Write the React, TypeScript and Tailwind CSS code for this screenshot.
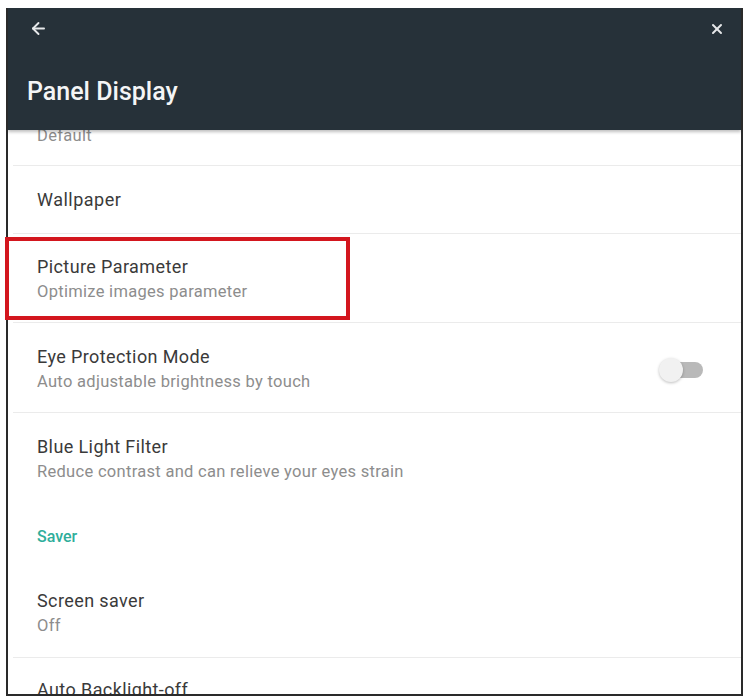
import React from "react";
import { ArrowLeft, X } from "lucide-react";

const font = { fontFamily: "Roboto, 'Noto Sans', Arial, sans-serif" };

function Divider() {
  return <div className="ml-[5px] h-px bg-[#ebebeb]" />;
}

function TwoLine({ title, sub, right, pt = "pt-[21px]", pb = "pb-[20px]" }: { title: string; sub: string; right?: React.ReactNode; pt?: string; pb?: string }) {
  return (
    <div className={`flex items-center justify-between pl-[29px] pr-[38px] ${pt} ${pb}`}>
      <div className="flex flex-col">
        <div className="text-[18px] leading-6 tracking-[0.4px] text-[#3a3a3a]">{title}</div>
        <div className="mt-[3px] text-[16.5px] leading-5 tracking-[0.3px] text-[#8d8d8d]">{sub}</div>
      </div>
      {right}
    </div>
  );
}

function Toggle() {
  return (
    <div className="relative mt-[2px] h-[24px] w-[44px]">
      <div className="absolute right-0 top-[4px] h-[16px] w-[32px] rounded-full bg-[#b9b9b9]" />
      <div className="absolute left-0 top-0 h-[24px] w-[24px] rounded-full bg-[#f1f1f1] shadow-[0_1px_3px_rgba(0,0,0,0.25)]" />
    </div>
  );
}

export default function App() {
  return (
    <div className="relative h-[698px] w-[745px] overflow-hidden bg-white" style={font}>
      <div className="ml-[6px] mt-[8px] flex h-[688px] w-[737px] flex-col overflow-hidden border-x-2 border-b-2 border-[#2a2a2a] bg-white">
        <div className="relative z-10 flex h-[122px] shrink-0 flex-col bg-[#263139] shadow-[0_2px_3px_rgba(0,0,0,0.25)]">
          <div className="flex items-center justify-between pl-[21px] pr-[16px] pt-[11px]">
            <ArrowLeft size={19} strokeWidth={2.4} className="text-[#e6e8ea]" />
            <X size={16} strokeWidth={3} className="text-[#e6e8ea]" />
          </div>
          <div className="pl-[19px] pt-[38px] text-[25px] font-medium leading-8 text-[#f4f5f6]">Panel Display</div>
        </div>
        <div className="flex flex-col">
          <div className="h-[35px] pl-[29px]">
            <div className="-mt-[4px] text-[16.5px] leading-5 tracking-[0.3px] text-[#8d8d8d]">Default</div>
          </div>
          <Divider />
          <div className="flex h-[67px] items-center pl-[29px] text-[18px] tracking-[0.5px] text-[#3a3a3a]">Wallpaper</div>
          <Divider />
          <TwoLine title="Picture Parameter" sub="Optimize images parameter" />
          <Divider />
          <TwoLine title="Eye Protection Mode" sub="Auto adjustable brightness by touch" pt="pt-[22px]" right={<Toggle />} />
          <Divider />
          <TwoLine title="Blue Light Filter" sub="Reduce contrast and can relieve your eyes strain" pt="pt-[22px]" pb="pb-0" />
          <div className="pl-[29px] pt-[45px] text-[16px] font-medium leading-5 text-[#2fae9b]">Saver</div>
          <TwoLine title="Screen saver" sub="Off" pt="pt-[42px]" pb="pb-[21px]" />
          <Divider />
          <div className="pl-[29px] pt-[20px] text-[18px] leading-6 tracking-[0.4px] text-[#3a3a3a]">Auto Backlight-off</div>
        </div>
      </div>
      <div className="absolute left-[5px] top-[237px] h-[83px] w-[345px] border-4 border-[#d3161e]" />
    </div>
  );
}
